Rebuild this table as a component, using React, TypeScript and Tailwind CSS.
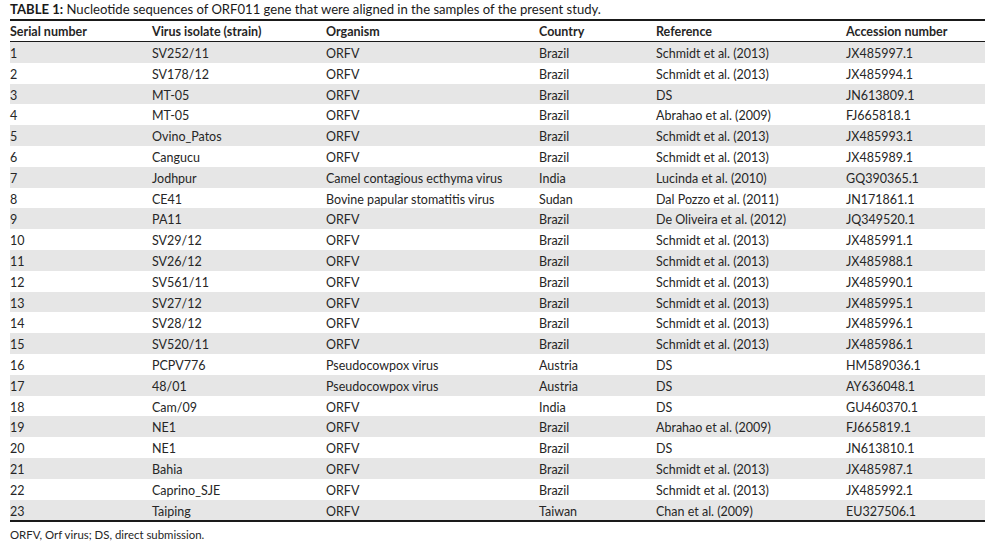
const rows: [string, string, string, string, string, string][] = [
  ['1', 'SV252/11', 'ORFV', 'Brazil', 'Schmidt et al. (2013)', 'JX485997.1'],
  ['2', 'SV178/12', 'ORFV', 'Brazil', 'Schmidt et al. (2013)', 'JX485994.1'],
  ['3', 'MT-05', 'ORFV', 'Brazil', 'DS', 'JN613809.1'],
  ['4', 'MT-05', 'ORFV', 'Brazil', 'Abrahao et al. (2009)', 'FJ665818.1'],
  ['5', 'Ovino_Patos', 'ORFV', 'Brazil', 'Schmidt et al. (2013)', 'JX485993.1'],
  ['6', 'Cangucu', 'ORFV', 'Brazil', 'Schmidt et al. (2013)', 'JX485989.1'],
  ['7', 'Jodhpur', 'Camel contagious ecthyma virus', 'India', 'Lucinda et al. (2010)', 'GQ390365.1'],
  ['8', 'CE41', 'Bovine papular stomatitis virus', 'Sudan', 'Dal Pozzo et al. (2011)', 'JN171861.1'],
  ['9', 'PA11', 'ORFV', 'Brazil', 'De Oliveira et al. (2012)', 'JQ349520.1'],
  ['10', 'SV29/12', 'ORFV', 'Brazil', 'Schmidt et al. (2013)', 'JX485991.1'],
  ['11', 'SV26/12', 'ORFV', 'Brazil', 'Schmidt et al. (2013)', 'JX485988.1'],
  ['12', 'SV561/11', 'ORFV', 'Brazil', 'Schmidt et al. (2013)', 'JX485990.1'],
  ['13', 'SV27/12', 'ORFV', 'Brazil', 'Schmidt et al. (2013)', 'JX485995.1'],
  ['14', 'SV28/12', 'ORFV', 'Brazil', 'Schmidt et al. (2013)', 'JX485996.1'],
  ['15', 'SV520/11', 'ORFV', 'Brazil', 'Schmidt et al. (2013)', 'JX485986.1'],
  ['16', 'PCPV776', 'Pseudocowpox virus', 'Austria', 'DS', 'HM589036.1'],
  ['17', '48/01', 'Pseudocowpox virus', 'Austria', 'DS', 'AY636048.1'],
  ['18', 'Cam/09', 'ORFV', 'India', 'DS', 'GU460370.1'],
  ['19', 'NE1', 'ORFV', 'Brazil', 'Abrahao et al. (2009)', 'FJ665819.1'],
  ['20', 'NE1', 'ORFV', 'Brazil', 'DS', 'JN613810.1'],
  ['21', 'Bahia', 'ORFV', 'Brazil', 'Schmidt et al. (2013)', 'JX485987.1'],
  ['22', 'Caprino_SJE', 'ORFV', 'Brazil', 'Schmidt et al. (2013)', 'JX485992.1'],
  ['23', 'Taiping', 'ORFV', 'Taiwan', 'Chan et al. (2009)', 'EU327506.1'],
]

const headers = ['Serial number', 'Virus isolate (strain)', 'Organism', 'Country', 'Reference', 'Accession number']

// column widths measured from the reference
const cols = 'grid grid-cols-[142px_174px_213px_117px_190px_1fr]'

export default function App() {
  return (
    <div className="w-[993px] h-[551px] bg-white text-[#262626] font-['Lato','Liberation_Sans',sans-serif] text-[12.5px]">
      <div className="pl-[10px] pr-[8px]">
        <p className="h-[20px] leading-[20px] text-[13.1px] text-[#1a1a1a] -mt-[1px] whitespace-nowrap">
          <span className="font-bold">TABLE 1:</span> Nucleotide sequences of ORF011 gene that were aligned in the samples of the present study.
        </p>
        <div className="border-t-2 border-[#1a1a1a]">
          <div className={`${cols} h-[21px] pt-[2px] items-center font-bold border-b border-[#1a1a1a]`}>
            {headers.map(h => <div key={h}>{h}</div>)}
          </div>
          {rows.map((r, i) => (
            <div key={i} className={`${cols} h-[20.8px] pt-[3px] items-center ${i % 2 === 0 ? 'bg-[#e6e6e6]' : 'bg-white'}`}>
              {r.map((c, j) => <div key={j}>{c}</div>)}
            </div>
          ))}
          <div className="border-t-[2.5px] border-[#1a1a1a]" />
        </div>
        <p className="mt-[5px] text-[11.4px] leading-[16px]">ORFV, Orf virus; DS, direct submission.</p>
      </div>
    </div>
  )
}
